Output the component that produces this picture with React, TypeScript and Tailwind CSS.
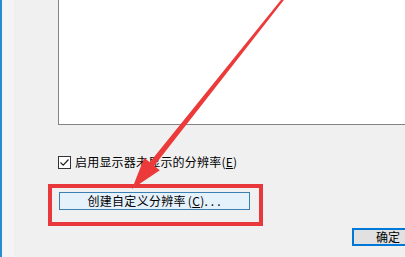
import React from "react";

const font = { fontFamily: '"Noto Sans CJK SC", "Noto Sans", sans-serif' };

function Arrow() {
  return (
    <svg className="absolute inset-0 pointer-events-none" width="405" height="257" viewBox="0 0 405 257">
      <polygon
        fill="#ec3a3a"
        points="283.1,-2.7 284.9,-1.3 154.2,165.7 159.8,170.2 132,189 144.2,157.8 149.8,162.3"
      />
    </svg>
  );
}

export default function App() {
  return (
    <div
      className="relative w-[405px] h-[257px] overflow-hidden bg-[#f0f0f0] flex text-[12px] text-black"
      style={font}
    >
      {/* window edge */}
      <div className="w-[2px] bg-[#2a8bd0] flex-shrink-0" />
      <div className="w-[12px] bg-[#f4f4f4] flex-shrink-0" />

      <div className="flex flex-col flex-shrink-0 pl-[34px]">
        {/* list box */}
        <div className="ml-[10px] w-[360px] h-[125px] bg-white border-l border-b border-[#838383]" />

        {/* checkbox row */}
        <div className="ml-[10px] mt-[30px] flex items-center h-[14px]">
          <div className="w-[13px] h-[13px] border border-[#333] bg-white flex items-center justify-center">
            <svg width="11" height="11" viewBox="0 0 11 11">
              <path d="M1.5 5.5 L4.2 8.2 L9.5 2.5" fill="none" stroke="#222" strokeWidth="1.2" />
            </svg>
          </div>
          <span className="ml-[4px] leading-[14px] tracking-[0.2px]">
            启用显示器未显示的分辨率(<span className="underline">E</span>)
          </span>
        </div>

        {/* highlighted button */}
        <div className="mt-[15px] w-[215px] h-[42px] border-4 border-[#e8383b] pt-[4px] pl-[7px]">
          <div className="w-[191px] h-[18px] bg-[#e5f1fb] border border-[#3c7fb1] flex items-center justify-center leading-none">
            <span className="tracking-[0.3px] ml-[2px]">
              创建自定义分辨率<span className="ml-[2px]">(</span><span className="underline">C</span>)<span className="tracking-[3px]">...</span>
            </span>
          </div>
        </div>

        {/* ok button */}
        <div className="ml-[304px] mt-[2px] w-[70px] h-[18px] bg-[#e1e1e1] border-2 border-[#0078d7] flex items-center pl-[22px] leading-none">
          确定
        </div>
      </div>

      <Arrow />
    </div>
  );
}
